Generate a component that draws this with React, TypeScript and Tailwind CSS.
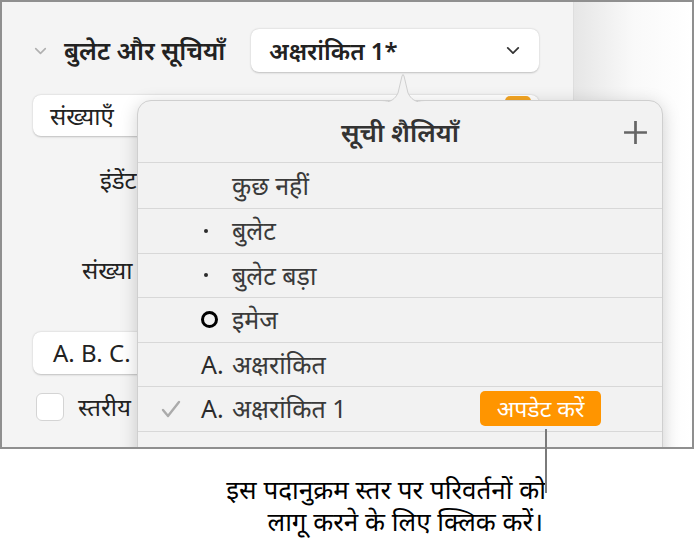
import React from "react";

const font = { fontFamily: '"Noto Sans", "Noto Sans Devanagari", "Lohit Devanagari", sans-serif' };

function Chevron({ className }: { className?: string }) {
  return (
    <svg className={className} viewBox="0 0 16 10" fill="none" stroke="currentColor" strokeWidth={2} strokeLinecap="round" strokeLinejoin="round">
      <path d="M2 2l6 6 6-6" />
    </svg>
  );
}

const Dot = () => <span className="ml-[2px] w-[4px] h-[4px] rounded-full bg-[#2b2b2b]" />;

function Row({ marker, label, first, checked, badge }: { marker?: React.ReactNode; label: string; first?: boolean; checked?: boolean; badge?: boolean }) {
  return (
    <div className={`flex items-center border-b border-[#d8d8d8] shrink-0 ${first ? "h-[46px]" : "h-[44.5px]"}`}>
      <div className="w-[22px] ml-[22px] flex justify-center">
        {checked && (
          <svg className="w-[20px] h-[18px] text-[#ababab]" viewBox="0 0 20 18" fill="none" stroke="currentColor" strokeWidth={2.4} strokeLinecap="round" strokeLinejoin="round">
            <path d="M2 10l5 6L18 2" />
          </svg>
        )}
      </div>
      <div className="w-[30px] ml-[20px] flex items-center text-[25px] text-[#2b2b2b] leading-none">{marker}</div>
      <span className="text-[25px] text-[#3a3a3a] leading-none">{label}</span>
      {badge && (
        <div className="ml-auto mr-[61px] h-[35px] w-[121px] rounded-[5px] bg-[#ff9500] text-white text-[23px] leading-none flex items-center justify-center">
          अपडेट करें
        </div>
      )}
    </div>
  );
}

export default function App() {
  return (
    <div className="w-[694px] h-[551px] bg-white relative overflow-hidden" style={font}>
      {/* Screenshot frame */}
      <div className="relative h-[449px] border-2 border-[#8f8f8f] overflow-hidden flex">
        {/* Sidebar */}
        <div className="w-[572px] bg-[#f4f4f4] border-r border-[#dedede] flex flex-col pt-[27px] pl-[31px] pr-[34px]">
          <div className="flex items-center h-[43px] shrink-0">
            <Chevron className="w-[13px] h-[8px] text-[#b0b0b0] ml-[1px]" />
            <span className="ml-[17px] text-[25px] leading-none font-semibold text-[#222]">बुलेट और सूचियाँ</span>
            <div className="ml-auto w-[288px] h-[43px] bg-white rounded-[8px] shadow-[0_0.5px_2px_rgba(0,0,0,0.22)] flex items-center pl-[18px] pr-[19px]">
              <span className="text-[24px] leading-none font-semibold text-[#222]">अक्षरांकित 1*</span>
              <Chevron className="ml-auto w-[14px] h-[9px] text-[#333]" />
            </div>
          </div>
          <div className="mt-[23px] h-[41px] shrink-0 bg-white rounded-[8px] shadow-[0_0.5px_2px_rgba(0,0,0,0.22)] flex items-center pl-[17px] pr-[8px]">
            <span className="text-[24px] leading-none text-[#222]">संख्याएँ</span>
            <div className="ml-auto w-[26px] h-[20px] rounded-[5px] bg-[#f5a623] self-start mt-[1px]" />
          </div>
          <div className="mt-[29px] h-[30px] shrink-0 flex items-center pl-[67px] text-[24px] leading-none text-[#222]">इंडेंट</div>
          <div className="mt-[60px] h-[30px] shrink-0 flex items-center pl-[49px] text-[24px] leading-none text-[#222]">संख्या</div>
          <div className="mt-[47px] w-[200px] h-[42px] shrink-0 bg-white rounded-[8px] shadow-[0_0.5px_2px_rgba(0,0,0,0.22)] flex items-center pl-[20px]">
            <span className="text-[24px] leading-none text-[#222]">A. B. C.</span>
          </div>
          <div className="mt-[19px] h-[28px] shrink-0 flex items-center">
            <div className="w-[28px] h-[28px] ml-[3px] rounded-[6px] bg-white border border-[#d4d4d4]" />
            <span className="ml-[14px] text-[24px] leading-none text-[#222]">स्तरीय</span>
          </div>
        </div>
        {/* Document area */}
        <div className="flex-1 bg-gradient-to-r from-[#e6e6e6] via-[#f9f9f9] to-white" />

        {/* Popover */}
        <div className="absolute left-[135px] top-[98px] w-[526px] h-[400px] bg-[#f2f2f2] rounded-[14px] border border-[#cfcfcf] shadow-[0_4px_18px_rgba(0,0,0,0.18)] flex flex-col">
          <svg className="absolute left-[243px] -top-[28px] w-[44px] h-[30px]" viewBox="0 0 44 30">
            <path d="M0 29.5 C10 29.5 14 26 17 20 L21 3 Q22 0 23 3 L27 20 C30 26 34 29.5 44 29.5 Z" fill="#f2f2f2" stroke="#cfcfcf" strokeWidth={1} />
            <rect x="0" y="29" width="44" height="2" fill="#f2f2f2" />
          </svg>
          <div className="h-[62px] shrink-0 border-b border-[#d8d8d8] flex items-center justify-center relative">
            <span className="text-[26px] leading-none font-semibold text-[#333]">सूची शैलियाँ</span>
            <svg className="absolute right-[14px] top-[19px] w-[25px] h-[25px] text-[#666]" viewBox="0 0 24 24" fill="none" stroke="currentColor" strokeWidth={2.6}>
              <path d="M12 1v22M1 12h22" />
            </svg>
          </div>
          <Row first label="कुछ नहीं" />
          <Row label="बुलेट" marker={<Dot />} />
          <Row label="बुलेट बड़ा" marker={<Dot />} />
          <Row
            label="इमेज"
            marker={<span className="-ml-[1px] w-[17px] h-[17px] rounded-full border-[3px] border-black" />}
          />
          <Row label="अक्षरांकित" marker={<span className="-ml-[1px]">A.</span>} />
          <Row checked label="अक्षरांकित 1" marker={<span className="-ml-[1px]">A.</span>} badge />
          <Row label="" marker={<Dot />} />
        </div>
      </div>

      {/* Callout line */}
      <div className="absolute left-[545px] top-[429px] w-[2px] h-[64px] bg-[#7a7a7a]" />

      {/* Caption */}
      <div className="w-[546px] pt-[26px] text-right text-[26px] text-black flex flex-col gap-[4px]">
        <div className="h-[28px] leading-[28px]">इस पदानुक्रम स्तर पर परिवर्तनों को</div>
        <div className="h-[28px] leading-[28px] pr-[3px]">लागू करने के लिए क्लिक करें।</div>
      </div>
    </div>
  );
}
